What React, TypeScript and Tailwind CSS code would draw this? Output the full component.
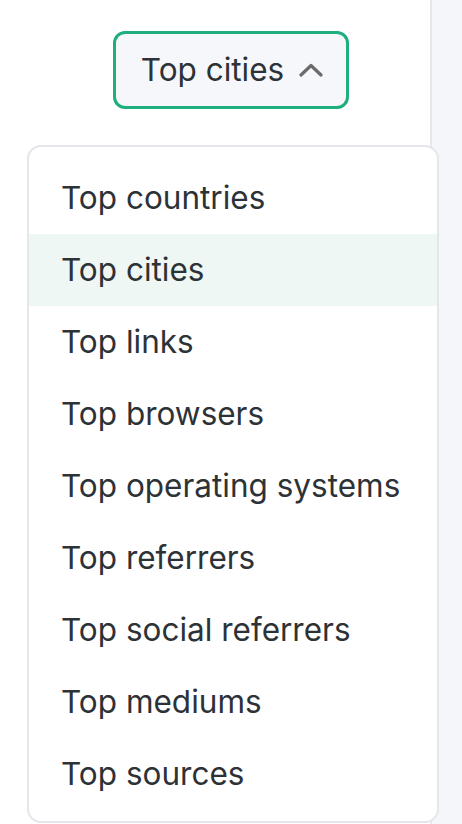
import React from 'react';

const options = [
  'Top countries',
  'Top cities',
  'Top links',
  'Top browsers',
  'Top operating systems',
  'Top referrers',
  'Top social referrers',
  'Top mediums',
  'Top sources',
];

const App = () => {
  const selected = 'Top cities';

  return (
    <div
      className="relative flex w-[462px] h-[824px] overflow-hidden bg-white"
      style={{ fontFamily: 'Inter, "Noto Sans", sans-serif' }}
    >
      {/* Left panel */}
      <div className="w-[432px] h-full bg-white border-r-2 border-[#e6e8ee]"></div>
      {/* Right area */}
      <div className="flex-1 h-full bg-[#f5f6fa]"></div>

      {/* Select trigger */}
      <div className="absolute top-[31px] left-0 right-0 flex justify-center">
        <button className="flex items-center gap-[15px] h-[78px] pl-[25px] pr-[23px] rounded-[12px] border-[3px] border-[#1fae7d] bg-[#f6f7fb] text-[31.5px] text-[#2d3237]">
          <span>Top cities</span>
          <svg width="24" height="14" viewBox="0 0 24 14" fill="none">
            <path d="M2 12 L12 2.5 L22 12" stroke="#6b6b6b" strokeWidth="3.2" strokeLinecap="round" strokeLinejoin="round" />
          </svg>
        </button>
      </div>

      {/* Dropdown menu */}
      <div className="absolute left-[27px] top-[145px] w-[412px] h-[678px] rounded-[14px] border-2 border-[#e4e6ec] bg-white pt-[15px]">
        {options.map((opt) => (
          <div
            key={opt}
            className={`flex items-center h-[72px] pl-[32px] text-[31.5px] text-[#2d3237] ${
              opt === selected ? 'bg-[#eef7f3]' : ''
            }`}
          >
            {opt}
          </div>
        ))}
      </div>
    </div>
  );
};

export default App;
